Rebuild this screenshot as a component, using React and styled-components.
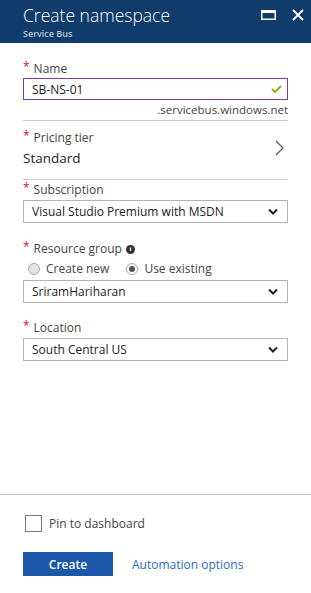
import React from "react";
import styled, { createGlobalStyle } from "styled-components";

const HeaderBlue = "#0f3c6b";
const FieldBorder = "#b4b4b4";
const TextDark = "#333333";

const GlobalStyle = createGlobalStyle`
	html, body { margin: 0; padding: 0; background: #ffffff; }
	body { font-family: "Segoe UI", "Open Sans", "Liberation Sans", sans-serif; color: ${TextDark}; }
	* { box-sizing: border-box; }
`;

const Blade = styled.div`
	height: 100vh;
	display: flex;
	flex-direction: column;
	background: #fff;
`;

const Header = styled.header`
	height: 43px;
	background: ${HeaderBlue};
	display: flex;
	justify-content: space-between;
	align-items: flex-start;
	padding: 0 7px 0 23px;
	flex-shrink: 0;
`;

const TitleBlock = styled.div`
	display: flex;
	flex-direction: column;
`;

const Title = styled.h1`
	margin: 4px 0 0;
	font-size: 17.5px;
	font-weight: 300;
	line-height: 22px;
	color: #fff;
`;

const Subtitle = styled.div`
	margin-top: 2px;
	font-size: 9px;
	font-weight: 600;
	line-height: 12px;
	color: #b9c6d6;
`;

const HeaderIcons = styled.div`
	display: flex;
	align-items: center;
	gap: 16px;
	margin-top: 9px;
`;

const Form = styled.main`
	flex: 1;
	padding: 0 23px;
	display: flex;
	flex-direction: column;
`;

const Label = styled.div`
	margin-top: ${({ $top }) => $top}px;
	font-size: 12px;
	line-height: 16px;
	color: #444;
	display: flex;
	align-items: center;
`;

const Star = styled.span`
	color: #e81123;
	font-size: 12px;
	margin-right: 4px;
	position: relative;
	top: -2px;
`;

const TextInput = styled.div`
	margin-top: 1px;
	height: 22px;
	border: 1px solid #7f3b9f;
	display: flex;
	align-items: center;
	justify-content: space-between;
	padding: 0 5px 0 8px;
	font-size: 12px;
	color: #222;
`;

const Hint = styled.div`
	margin-top: 3px;
	text-align: right;
	font-size: 11.5px;
	line-height: 14px;
	color: #444;
`;

const Divider = styled.div`
	margin-top: ${({ $top }) => $top}px;
	height: 1px;
	background: #c8c8c8;
`;

const PickerRow = styled.div`
	display: flex;
	align-items: center;
	justify-content: space-between;
	padding-right: 4px;
`;

const PickerArrow = styled.div`
	padding-top: 6px;
	display: flex;
`;

const PickerValue = styled.div`
	margin-top: 2px;
	font-size: 13.5px;
	line-height: 20px;
	color: #222;
`;

const Select = styled.div`
	margin-top: ${({ $top }) => $top}px;
	height: 23px;
	border: 1px solid ${FieldBorder};
	display: flex;
	align-items: center;
	justify-content: space-between;
	padding: 0 9px 0 8px;
	font-size: 12px;
	color: #222;
`;

const RadioGroup = styled.div`
	margin-top: 4px;
	display: flex;
	align-items: center;
	gap: 17px;
	padding-left: 5px;
	font-size: 12px;
	line-height: 16px;
	color: #444;
`;

const RadioOption = styled.label`
	display: flex;
	align-items: center;
	gap: 6px;
`;

const RadioDot = styled.span`
	width: 12px;
	height: 12px;
	border-radius: 50%;
	border: 1px solid #a8a8a8;
	background: ${({ $checked }) => ($checked ? "#fff" : "#e4e4e4")};
	display: flex;
	align-items: center;
	justify-content: center;

	&::after {
		content: "";
		width: 6px;
		height: 6px;
		border-radius: 50%;
		background: ${({ $checked }) => ($checked ? "#555" : "transparent")};
	}
`;

const InfoIcon = styled.span`
	width: 9px;
	height: 9px;
	margin-left: 4px;
	border-radius: 50%;
	background: #333;
	color: #fff;
	font-size: 7px;
	font-weight: 700;
	line-height: 9px;
	text-align: center;
	font-family: "Liberation Serif", serif;
`;

const Footer = styled.footer`
	border-top: 1px solid #c8c8c8;
	padding: 20px 23px 17px;
	display: flex;
	flex-direction: column;
	gap: 20px;
	flex-shrink: 0;
`;

const CheckRow = styled.label`
	display: flex;
	align-items: center;
	gap: 7px;
	padding-left: 2px;
	font-size: 12px;
	color: #444;
	height: 17px;
`;

const CheckBox = styled.span`
	width: 17px;
	height: 17px;
	border: 1px solid #7a7a7a;
	background: #fff;
`;

const Actions = styled.div`
	display: flex;
	align-items: center;
	gap: 19px;
`;

const PrimaryButton = styled.button`
	width: 90px;
	height: 24px;
	border: none;
	background: #1c57a9;
	color: #fff;
	font-family: inherit;
	font-size: 12px;
	font-weight: 600;
	padding: 0;
`;

const LinkButton = styled.a`
	font-size: 12px;
	color: #2b6cbf;
	text-decoration: none;
`;

const ChevronDown = () => (
	<svg width="10" height="7" viewBox="0 0 10 7">
		<polyline points="1,1.5 5,5.5 9,1.5" fill="none" stroke="#222" strokeWidth="2" />
	</svg>
);

const ChevronRight = () => (
	<svg width="9" height="16" viewBox="0 0 9 16">
		<polyline points="1,1 8,8 1,15" fill="none" stroke="#555" strokeWidth="1.2" />
	</svg>
);

const Check = () => (
	<svg width="11" height="8" viewBox="0 0 11 8">
		<polyline points="1,4 4,7 10,1" fill="none" stroke="#7fba00" strokeWidth="2" />
	</svg>
);

const Required = ({ children, top }) => (
	<Label $top={top}>
		<Star>*</Star>
		{children}
	</Label>
);

export default function App() {
	return (
		<Blade>
			<GlobalStyle />
			<Header>
				<TitleBlock>
					<Title>Create namespace</Title>
					<Subtitle>Service Bus</Subtitle>
				</TitleBlock>
				<HeaderIcons>
					<svg width="15" height="10" viewBox="0 0 15 10">
						<rect x="0.75" y="1.5" width="13.5" height="7.75" fill="none" stroke="#fff" strokeWidth="1.5" />
						<rect x="0" y="0" width="15" height="3" fill="#fff" />
					</svg>
					<svg width="12" height="12" viewBox="0 0 12 12">
						<path d="M1 1 L11 11 M11 1 L1 11" stroke="#fff" strokeWidth="1.8" />
					</svg>
				</HeaderIcons>
			</Header>

			<Form>
				<Required top={18}>Name</Required>
				<TextInput>
					<span>SB-NS-01</span>
					<Check />
				</TextInput>
				<Hint>.servicebus.windows.net</Hint>
				<Divider $top={3} />

				<PickerRow>
					<div>
						<Required top={9}>Pricing tier</Required>
						<PickerValue>Standard</PickerValue>
					</div>
					<PickerArrow>
						<ChevronRight />
					</PickerArrow>
				</PickerRow>
				<Divider $top={11} />

				<Required top={2}>Subscription</Required>
				<Select $top={2}>
					<span>Visual Studio Premium with MSDN</span>
					<ChevronDown />
				</Select>

				<Label $top={18}>
					<Star>*</Star>
					Resource group
					<InfoIcon>i</InfoIcon>
				</Label>
				<RadioGroup>
					<RadioOption>
						<RadioDot />
						Create new
					</RadioOption>
					<RadioOption>
						<RadioDot $checked />
						Use existing
					</RadioOption>
				</RadioGroup>
				<Select $top={3}>
					<span>SriramHariharan</span>
					<ChevronDown />
				</Select>

				<Required top={17}>Location</Required>
				<Select $top={2}>
					<span>South Central US</span>
					<ChevronDown />
				</Select>
			</Form>

			<Footer>
				<CheckRow>
					<CheckBox />
					Pin to dashboard
				</CheckRow>
				<Actions>
					<PrimaryButton>Create</PrimaryButton>
					<LinkButton href="#">Automation options</LinkButton>
				</Actions>
			</Footer>
		</Blade>
	);
}
